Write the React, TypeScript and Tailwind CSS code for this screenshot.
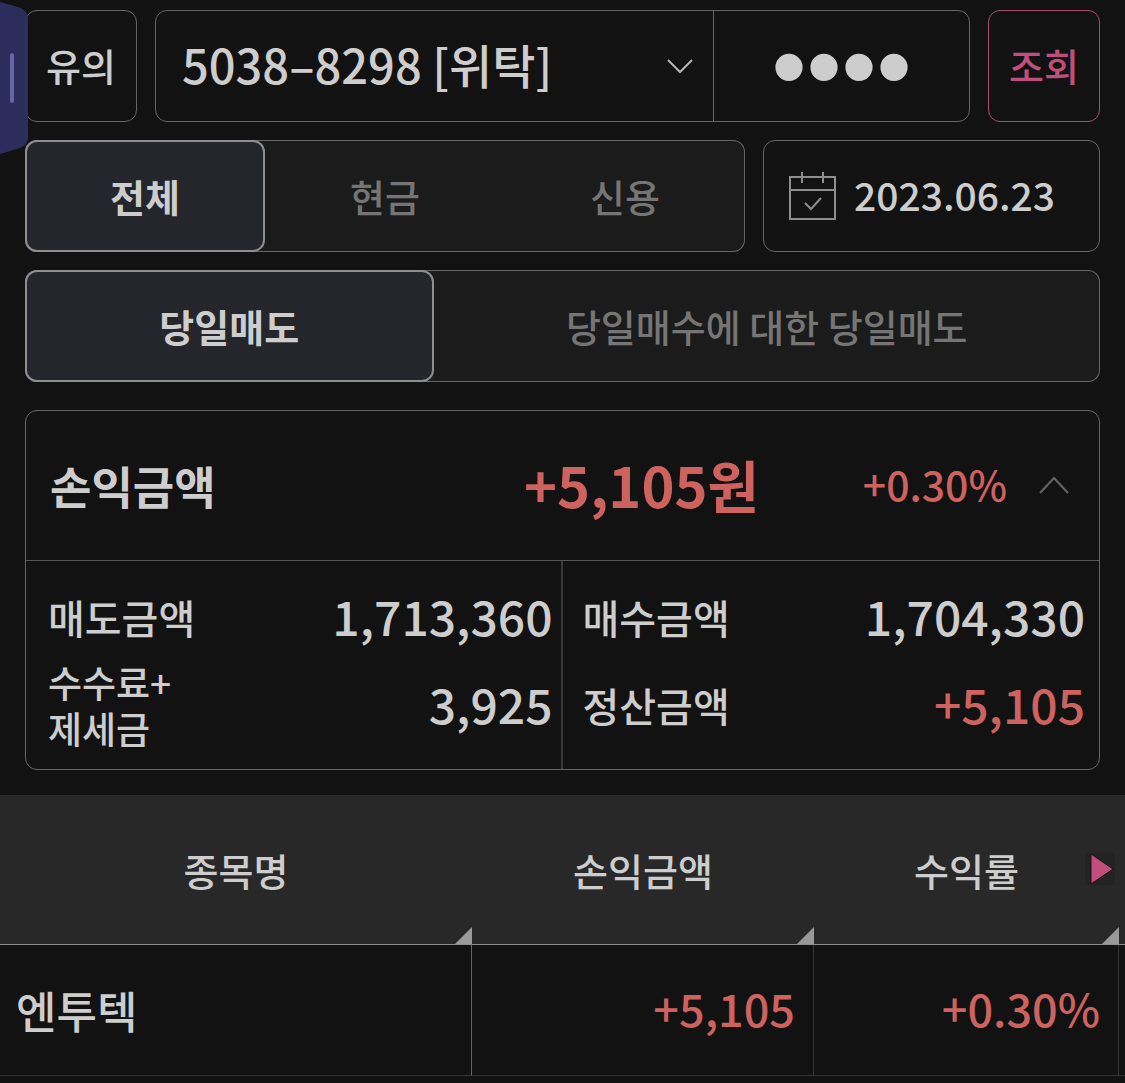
import React, { useState } from "react";
import clsx from "clsx";

interface ISegment {
	id: string;
	label: string;
}

interface ISegmentedProps {
	items: ISegment[];
	label: string;
	className: string;
}

interface ISummaryItem {
	label: React.ReactNode;
	value: string;
	isProfit?: boolean;
	isSmall?: boolean;
}

interface IHolding {
	name: string;
	profit: string;
	rate: string;
}

const creditTypes: ISegment[] = [
	{ id: "all", label: "전체" },
	{ id: "cash", label: "현금" },
	{ id: "credit", label: "신용" },
];

const tradeTypes: ISegment[] = [
	{ id: "sell", label: "당일매도" },
	{ id: "buy-sell", label: "당일매수에 대한 당일매도" },
];

const sellSummary: ISummaryItem[] = [
	{ label: "매도금액", value: "1,713,360" },
	{
		label: (
			<>
				수수료+
				<br />
				제세금
			</>
		),
		value: "3,925",
		isSmall: true,
	},
];

const buySummary: ISummaryItem[] = [
	{ label: "매수금액", value: "1,704,330" },
	{ label: "정산금액", value: "+5,105", isProfit: true },
];

const holdings: IHolding[] = [
	{ name: "엔투텍", profit: "+5,105", rate: "+0.30%" },
];

const Segmented = ({ items, label, className }: ISegmentedProps) => {
	const [selected, setSelected] = useState(items[0].id);

	return (
		<div
			role="group"
			aria-label={label}
			className={clsx(
				"grid h-28 rounded-xl bg-[#1b1b1b] inset-ring inset-ring-[#666666]",
				className,
			)}
		>
			{items.map((item) => (
				<button
					key={item.id}
					type="button"
					aria-pressed={item.id === selected}
					onClick={() => setSelected(item.id)}
					className={clsx(
						"rounded-xl pb-0.5 text-[38px]",
						item.id === selected
							? "border-2 border-[#8e8e8e] bg-[#25262b] font-bold text-[#cdcdcd]"
							: "font-medium text-[#757575]",
					)}
				>
					{item.label}
				</button>
			))}
		</div>
	);
};

const SummaryColumn = ({
	items,
	className,
}: {
	items: ISummaryItem[];
	className: string;
}) => (
	<dl
		className={clsx(
			"grid grid-rows-[60px_92px] gap-y-3 pt-[26px] pb-[18px]",
			className,
		)}
	>
		{items.map((item) => (
			<div key={item.value} className="flex items-center justify-between">
				<dt
					className={clsx(
						"font-medium",
						item.isSmall ? "text-[37px] leading-[46px]" : "text-[40px]",
					)}
				>
					{item.label}
				</dt>
				<dd
					className={clsx(
						"pb-1 text-[48px] font-medium",
						item.isProfit && "text-[#cd625f]",
					)}
				>
					{item.value}
				</dd>
			</div>
		))}
	</dl>
);

const CalendarIcon = () => (
	<svg
		width="48"
		height="50"
		viewBox="0 0 48 50"
		fill="none"
		stroke="#8e8e8e"
		strokeWidth="2"
		className="shrink-0"
		aria-hidden="true"
	>
		<path d="M2 6H47V48H2ZM2 19H47M14 1V12M35 1V12" />
		<path d="M17 32L23 38L33 27" />
	</svg>
);

const ColumnGrip = () => (
	<svg
		width="17"
		height="17"
		viewBox="0 0 17 17"
		className="absolute right-0 bottom-0"
		aria-hidden="true"
	>
		<path d="M17 0V17H0Z" fill="#999999" />
	</svg>
);

// Edge panel handle that floats over the left side of the screen
const EdgeHandle = () => (
	<svg
		width="28"
		height="153"
		viewBox="0 0 28 153"
		className="pointer-events-none absolute top-0.5 left-0"
		aria-hidden="true"
	>
		<path
			d="M0 0L18 5Q28 8 28 17V136Q28 143 20 146L0 152Z"
			fill="#2f2f63"
			fillOpacity="0.93"
		/>
		<path
			d="M12 53V99"
			stroke="#6464a8"
			strokeWidth="4"
			strokeLinecap="round"
		/>
	</svg>
);

const App = () => {
	const [isOpen, setIsOpen] = useState(true);

	return (
		<main className="relative min-h-screen bg-[#121212] pt-2.5 font-['Noto_Sans_CJK_KR',sans-serif] text-[#cdcdcd]">
			<div className="flex flex-col gap-[18px] px-[25px]">
				<div className="flex h-28 gap-[18px]">
					<button
						type="button"
						className="w-28 shrink-0 rounded-xl border border-[#666666] pb-1 text-[38px] font-medium"
					>
						유의
					</button>
					<div className="flex min-w-0 flex-1 rounded-xl border border-[#666666]">
						<div className="relative min-w-0 flex-1">
							<select
								aria-label="계좌번호"
								className="size-full appearance-none bg-transparent pb-1 pl-[26px] text-[47px] font-medium outline-none"
							>
								<option>5038–8298 [위탁]</option>
							</select>
							<svg
								width="26"
								height="15"
								viewBox="0 0 26 15"
								fill="none"
								stroke="#b5b5b5"
								strokeWidth="2"
								className="pointer-events-none absolute top-12 right-5"
								aria-hidden="true"
							>
								<path d="M1 1L13 13L25 1" />
							</svg>
						</div>
						<input
							type="password"
							aria-label="계좌 비밀번호"
							defaultValue="0000"
							className="h-full w-64 border-l border-[#666666] bg-transparent text-center font-['Liberation_Sans',sans-serif] text-[100px] outline-none"
						/>
					</div>
					<button
						type="button"
						className="w-28 shrink-0 rounded-xl border border-[#a94c70] pb-1 text-[38px] font-medium text-[#c04e7d]"
					>
						조회
					</button>
				</div>

				<div className="flex gap-[18px]">
					<Segmented
						items={creditTypes}
						label="거래 구분"
						className="min-w-0 flex-1 grid-cols-3"
					/>
					<label className="flex h-28 w-[337px] items-center gap-[18px] rounded-xl border border-[#666666] pl-6">
						<CalendarIcon />
						<input
							type="text"
							aria-label="조회 일자"
							defaultValue="2023.06.23"
							className="w-full min-w-0 bg-transparent pb-1 text-[39px] font-medium outline-none"
						/>
					</label>
				</div>

				<Segmented
					items={tradeTypes}
					label="매매 구분"
					className="grid-cols-[38%_1fr]"
				/>
			</div>

			<section className="mx-[25px] mt-7 rounded-xl border border-[#666666]">
				<div className="flex h-[150px] items-center border-b border-[#555555] pr-[30px] pl-6">
					<h2 className="flex-1 text-[45px] font-bold">손익금액</h2>
					<strong className="pb-1 text-[56px] font-bold text-[#cd625f]">
						+5,105원
					</strong>
					<span className="w-[248px] pb-1 text-right text-[41px] font-medium text-[#cd625f]">
						+0.30%
					</span>
					<button
						type="button"
						aria-label="상세 보기"
						aria-expanded={isOpen}
						onClick={() => setIsOpen(!isOpen)}
						className="ml-8 pb-0.5"
					>
						<svg
							width="30"
							height="18"
							viewBox="0 0 30 18"
							fill="none"
							stroke="#666666"
							strokeWidth="2"
							className={clsx(!isOpen && "rotate-180")}
						>
							<path d="M1 17L15 2L29 17" />
						</svg>
					</button>
				</div>
				{isOpen && (
					<div className="grid grid-cols-2">
						<SummaryColumn
							items={sellSummary}
							className="border-r-2 border-[#3a3a3a] pr-2 pl-[22px]"
						/>
						<SummaryColumn items={buySummary} className="pr-3.5 pl-5" />
					</div>
				)}
			</section>

			<table className="mt-[25px] w-full table-fixed border-separate border-spacing-0">
				<thead>
					<tr className="h-[150px] bg-[#282828] text-[38px]">
						<th className="relative border-b border-[#8e8e8e] font-medium">
							종목명
							<ColumnGrip />
						</th>
						<th className="relative w-[342px] border-b border-[#8e8e8e] font-medium">
							손익금액
							<ColumnGrip />
						</th>
						<th className="relative w-[305px] border-b border-[#8e8e8e] font-medium">
							수익률
							<svg
								width="30"
								height="32"
								viewBox="0 0 30 32"
								className="absolute top-[58px] right-1"
								aria-hidden="true"
							>
								<path d="M0 0H30V32H0Z" fill="#232323" />
								<path
									d="M6 1V31L28 16Z"
									fill="#c04e7d"
									stroke="#1b1015"
									strokeWidth="1"
								/>
							</svg>
							<ColumnGrip />
						</th>
						<td className="w-1.5 border-b border-[#8e8e8e]" />
					</tr>
				</thead>
				<tbody>
					{holdings.map((item) => (
						<tr key={item.name} className="h-[131px]">
							<td className="border-r border-b border-r-[#666666] border-b-[#333333] pl-4 text-[44px] font-medium">
								{item.name}
							</td>
							<td className="border-r border-b border-[#333333] pr-[18px] pb-1 text-right text-[45px] font-medium text-[#cd625f]">
								{item.profit}
							</td>
							<td className="border-r border-b border-[#333333] pr-[18px] pb-1 text-right text-[45px] font-medium text-[#cd625f]">
								{item.rate}
							</td>
							<td className="border-b border-[#333333]" />
						</tr>
					))}
				</tbody>
			</table>

			<EdgeHandle />
		</main>
	);
};

export default App;
